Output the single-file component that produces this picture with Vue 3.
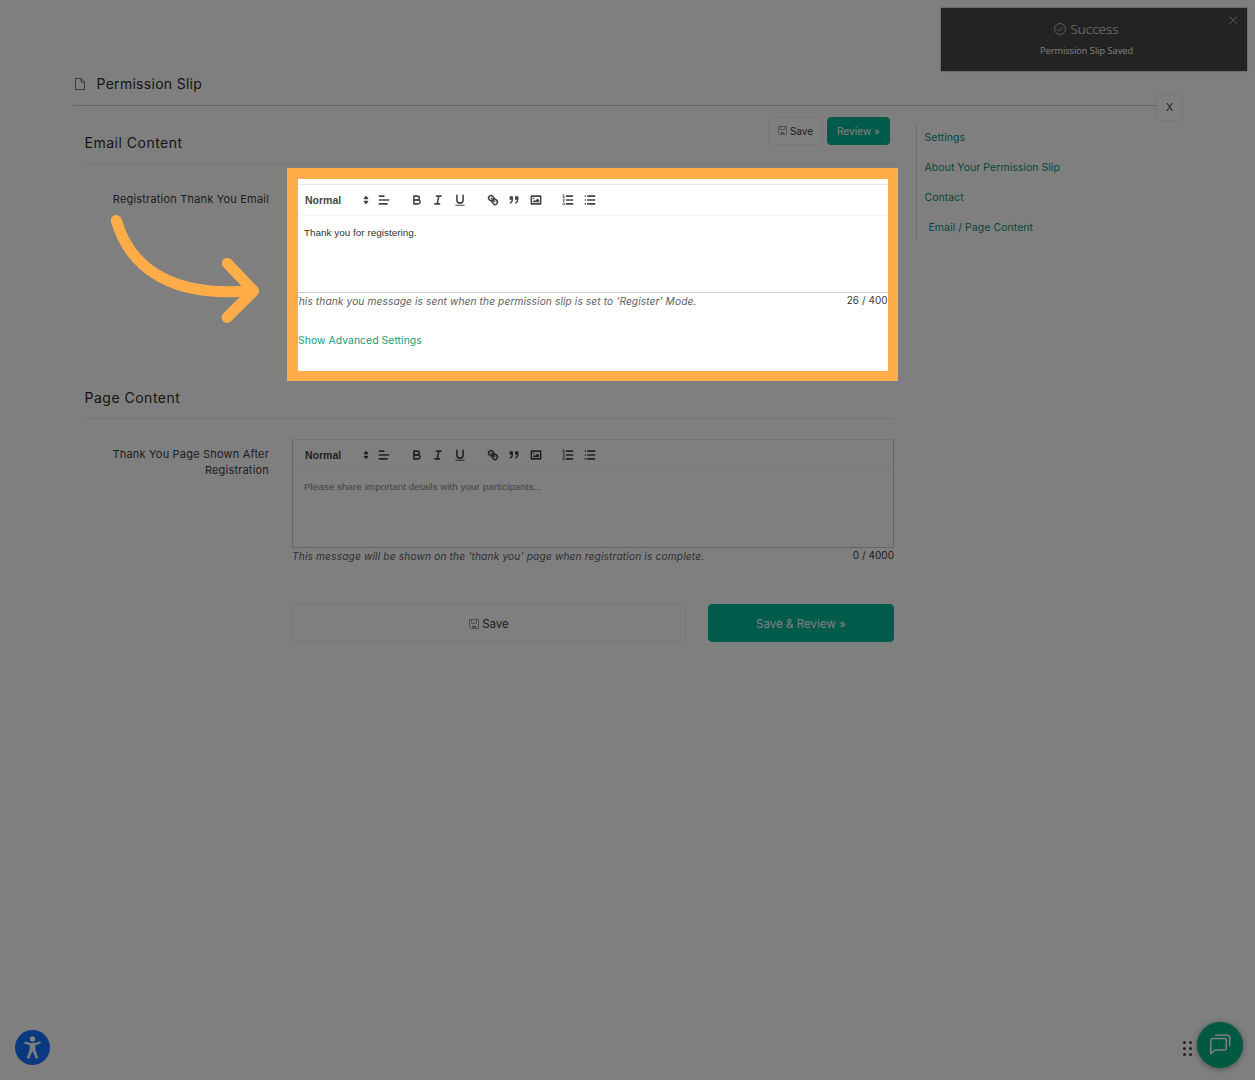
<script setup>
const sections = [
  {
    title: 'Email Content',
    label: 'Registration Thank You Email',
    text: 'Thank you for registering.',
    empty: false,
    hint: "This thank you message is sent when the permission slip is set to 'Register' Mode.",
    count: '26 / 4000',
    advanced: true,
  },
  {
    title: 'Page Content',
    label: 'Thank You Page Shown After Registration',
    text: 'Please share important details with your participants...',
    empty: true,
    hint: "This message will be shown on the 'thank you' page when registration is complete.",
    count: '0 / 4000',
    advanced: false,
  },
]
const links = ['Settings', 'About Your Permission Slip', 'Contact', 'Email / Page Content']
</script>

<template>
  <div class="page">
    <header class="page-head">
      <svg class="doc" viewBox="0 0 10 12"><path d="M.5.5h5.7l3.3 3.3v7.7h-9zM6 .7V4h3.3" /></svg>
      <h1>Permission Slip</h1>
      <button class="close">X</button>
    </header>

    <div class="body">
      <main>
        <section v-for="(s, i) in sections" :key="s.title" class="section">
          <div class="section-head">
            <h2>{{ s.title }}</h2>
            <div v-if="i === 0" class="actions">
              <button class="btn small">
                <svg class="disk" viewBox="0 0 10 10"><path d="M.5.5h9v9h-8l-1-1zM2.5.5v3.6h5V.5" /><path class="slot" d="M3 7.800h4" /></svg>
                Save
              </button>
              <button class="btn small primary">Review »</button>
            </div>
          </div>
          <div class="row">
            <label>{{ s.label }}</label>
            <div class="field">
              <div class="editor">
                <div class="toolbar">
                  <span class="picker">Normal
                    <svg class="ic fill" viewBox="0 0 18 18"><polygon points="7 11 9 13 11 11 7 11" /><polygon points="7 7 9 5 11 7 7 7" /></svg>
                  </span>
                  <svg class="ic align" viewBox="0 0 18 18"><path d="M3 4h6M3 9h12M3 14h10" /></svg>
                  <span class="group">
                    <svg class="ic" viewBox="0 0 18 18"><path d="M5,4H9.5A2.5,2.5,0,0,1,12,6.5v0A2.5,2.5,0,0,1,9.5,9H5V4Z" /><path d="M5,9h5.5A2.5,2.5,0,0,1,13,11.5v0A2.5,2.5,0,0,1,10.5,14H5V9Z" /></svg>
                    <svg class="ic" viewBox="0 0 18 18"><path d="M7 4h6M5 14h6M8 14L10 4" /></svg>
                    <svg class="ic" viewBox="0 0 18 18"><path d="M5,3V9a4.012,4.012,0,0,0,4,4H9a4.012,4.012,0,0,0,4-4V3" /><rect class="solid" x="3" y="15" width="12" height="1.300" rx=".5" /></svg>
                  </span>
                  <span class="group">
                    <svg class="ic" viewBox="0 0 18 18"><path d="M7 7l4 4" /><path d="M8.9,4.577a3.476,3.476,0,0,1,.36,4.679A3.476,3.476,0,0,1,4.577,8.900C3.185,7.500,2.035,6.400,4.217,4.217S7.500,3.185,8.900,4.577Z" /><path d="M13.423,9.100a3.476,3.476,0,0,0-4.679-.36,3.476,3.476,0,0,0,.36,4.679c1.392,1.392,2.500,2.542,4.679.36S14.815,10.500,13.423,9.100Z" /></svg>
                    <svg class="ic fill quote" viewBox="0 0 18 18"><rect x="4" y="5" width="3" height="3" /><rect x="11" y="5" width="3" height="3" /><path d="M7,8c0,4.031-3,5-3,5M14,8c0,4.031-3,5-3,5" /></svg>
                    <svg class="ic" viewBox="0 0 18 18"><rect x="3" y="4" width="12" height="10" /><circle class="solid" cx="6" cy="7" r="1" /><polygon class="solid" points="5 12 5 11 7 9 8 10 11 7 13 9 13 12" /></svg>
                  </span>
                  <span class="group">
                    <svg class="ic" viewBox="0 0 18 18"><path d="M7 4h8M7 9h8M7 14h8" /><path class="thin" d="M2.300 2.700l1.200-.5v3.300M2.500 5.500h2M4.500,10.500h-2c0-.234,1.850-1.076,1.850-2.234A.959.959,0,0,0,2.500,8.156M2.500,14.846a.959.959,0,0,0,1.850-.109A.7.7,0,0,0,3.750,14a.688.688,0,0,0,.6-.736.959.959,0,0,0-1.850-.109" /></svg>
                    <svg class="ic" viewBox="0 0 18 18"><path d="M6 4h9M6 9h9M6 14h9M3 4h.01M3 9h.01M3 14h.01" /></svg>
                  </span>
                </div>
                <div class="content" :class="{ empty: s.empty }">{{ s.text }}</div>
              </div>
              <div class="below">
                <em :class="{ loose: s.empty }">{{ s.hint }}</em>
                <span>{{ s.count }}</span>
              </div>
              <a v-if="s.advanced" class="advanced">Show Advanced Settings</a>
              <div v-else class="submit">
                <button class="btn wide">
                  <svg class="disk" viewBox="0 0 10 10"><path d="M.5.5h9v9h-8l-1-1zM2.5.5v3.6h5V.5" /><path class="slot" d="M3 7.800h4" /></svg>
                  Save
                </button>
                <button class="btn wide primary">Save &amp; Review »</button>
              </div>
            </div>
          </div>
        </section>
      </main>

      <nav>
        <a v-for="(l, i) in links" :key="l" :class="{ current: i === 3 }">{{ l }}</a>
      </nav>
    </div>

    <aside class="toast">
      <div class="toast-title">
        <svg viewBox="0 0 12 12"><circle cx="6" cy="6" r="5.500" /><path d="M3.400 6.200l1.800 1.800 3.500-3.800" /></svg>
        Success
      </div>
      <div class="toast-text">Permission Slip Saved</div>
      <svg class="toast-x" viewBox="0 0 8 8"><path d="M.5.5l7 7M7.500.5l-7 7" /></svg>
    </aside>

    <button class="a11y">
      <svg viewBox="0 0 35 35">
        <circle cx="17.500" cy="9" r="2.700" />
        <path d="M9.700 11.400l5.600 1.500h4.400l5.600-1.500.6 1.900-5.600 2v4.200l2.900 8.500-2.200.8-3.500-7.800-3.500 7.800-2.200-.8 2.900-8.500v-4.200l-5.600-2z" />
      </svg>
    </button>

    <div class="grip"><i v-for="n in 6" :key="n"></i></div>
    <button class="chat">
      <svg viewBox="0 0 22 22"><path d="M3.800 4.500H15.300a2 2 0 0 1 2 2v7.500a2 2 0 0 1-2 2H6L1.800 19.800V6.500a2 2 0 0 1 2-2zM6 1.200h12.700a2 2 0 0 1 2 2V12" /></svg>
    </button>

    <div class="spotlight"></div>
    <svg class="arrow" viewBox="0 0 160 120">
      <path d="M11.300 10.500C25 58 67 88 146 80.700M122.300 53.300L148.700 81L122 107.300" />
    </svg>
  </div>
</template>

<style>
body { background: #fff; }
</style>

<style scoped>
.page {
  position: relative;
  box-sizing: border-box;
  width: 1255px;
  height: 1080px;
  padding-top: 62px;
  overflow: hidden;
  background: #fff;
  color: #3c3c3c;
  font-family: Inter, sans-serif;
}
button { font-family: inherit; padding: 0; margin: 0; border: 0; }
h1, h2 { margin: 0; font-size: 14px; font-weight: 400; color: #2a2a2a; }

.page-head {
  position: relative;
  display: flex;
  align-items: center;
  box-sizing: border-box;
  width: 1084px;
  height: 44px;
  margin-left: 73px;
  border-bottom: 1px solid #ccc;
}
.doc { width: 10px; height: 12px; margin: 0 12px 0 1.5px; fill: none; stroke: #555; stroke-width: .8; }
h1 { letter-spacing: .29px; }
.close {
  position: absolute;
  left: 1083px;
  top: 32px;
  box-sizing: border-box;
  width: 27px;
  height: 27px;
  border: 1px solid #f0f0f0;
  border-radius: 4px;
  background: #fff;
  color: #444;
  font-size: 10.500px;
}

.body { display: flex; align-items: flex-start; margin-left: 84px; }
main { width: 810px; padding-top: 11px; }
.section { height: 255px; }
.section-head {
  display: flex;
  justify-content: space-between;
  align-items: flex-start;
  box-sizing: border-box;
  height: 47px;
  border-bottom: 1px solid #eaeaea;
}
h2 { margin-top: 16px; margin-left: .5px; line-height: 20px; letter-spacing: .5px; }
.actions { display: flex; gap: 4px; margin-right: 4px; }
.btn {
  display: flex;
  align-items: center;
  justify-content: center;
  gap: 3px;
  box-sizing: border-box;
  border: 1px solid #f0f0f0;
  border-radius: 4px;
  background: #fff;
  color: #3c3c3c;
}
.btn.primary { background: #00b694; border-color: #00b694; color: #fff; }
.small { width: 55px; height: 27.500px; font-size: 10px; }
.small.primary { width: 63px; letter-spacing: .08px; }
.disk { width: 9px; height: 9px; fill: none; stroke: #888; stroke-width: .8; }
.slot { stroke-width: 1.800; }

.row { display: flex; align-items: flex-start; gap: 23px; padding-top: 20px; }
label {
  width: 185px;
  padding-top: 8px;
  text-align: right;
  font-size: 11px;
  line-height: 15.500px;
  letter-spacing: .19px;
}
.field { width: 602px; }
.editor { box-sizing: border-box; height: 109px; border: 1px solid #ccc; border-top-color: #e8e8e8; }
.toolbar {
  display: flex;
  align-items: center;
  box-sizing: border-box;
  height: 31px;
  padding-left: 12px;
  border-bottom: 1px solid #f5f5f5;
}
.picker {
  display: flex;
  align-items: center;
  justify-content: space-between;
  width: 68px;
  font: bold 10.500px 'Liberation Sans', sans-serif;
  color: #444;
}
.ic {
  display: block;
  width: 14px;
  height: 14px;
  fill: none;
  stroke: #444;
  stroke-width: 2;
  stroke-linecap: round;
  stroke-linejoin: round;
}
.ic.fill { fill: #444; }
.ic.quote { stroke-width: 1.400; }
.solid { fill: #444; stroke: none; }
.thin { stroke-width: 1; }
.align { margin-left: 4px; }
.group { display: flex; gap: 7.600px; margin-left: 18.700px; }
.content { padding: 10px 11px 0; font: 9.930px/13px 'Liberation Sans', sans-serif; color: #333; }
.content.empty { padding-top: 9px; color: #888; }
.below { display: flex; justify-content: space-between; line-height: 14px; font-size: 10px; letter-spacing: .05px; }
.below em { padding-top: 1px; font-size: 10.200px; letter-spacing: .1px; color: #606060; }
.below em.loose { letter-spacing: .145px; }
.advanced {
  display: block;
  margin: 25px 0 0 6px;
  font-size: 10.400px;
  line-height: 16px;
  letter-spacing: .05px;
  color: #0fa080;
}
.submit { display: flex; justify-content: space-between; margin-top: 41px; }
.wide { width: 394px; height: 38px; padding-top: 1px; font-size: 11.500px; }
.wide .disk { width: 10px; height: 10px; }
.wide.primary { width: 186px; letter-spacing: .05px; }

nav {
  display: flex;
  flex-direction: column;
  height: 115px;
  margin: 19px 0 0 22px;
  padding-left: 7.500px;
  border-left: 1px solid #ddd;
}
nav a { flex: none; height: 30px; line-height: 26px; font-size: 10.500px; letter-spacing: .05px; color: #0a9072; white-space: nowrap; }
nav .current { padding-left: 4px; }

.toast {
  position: absolute;
  left: 941px;
  top: 8px;
  box-sizing: border-box;
  width: 306px;
  height: 63px;
  padding: 11px 15px 0 0;
  background: #464646;
  box-shadow: 0 0 2px #888;
  color: #fff;
  text-align: center;
  font-family: 'Open Sans', sans-serif;
}
.toast-title {
  display: flex;
  align-items: center;
  justify-content: center;
  gap: 4px;
  height: 20px;
  font-size: 13.500px;
  font-weight: 300;
}
.toast-title svg { width: 12px; height: 12px; margin-top: -1px; fill: none; stroke: #ddd; stroke-width: .8; }
.toast-text { margin-top: 5px; font-size: 9.200px; line-height: 14px; }
.toast-x { position: absolute; right: 9.500px; top: 8px; width: 8.500px; height: 8.500px; stroke: #ccc; stroke-width: .8; }

.a11y {
  position: absolute;
  left: 15px;
  top: 1030px;
  width: 35px;
  height: 35px;
  border-radius: 50%;
  background: #1472ff;
}
.a11y svg { display: block; fill: #fff; }
.grip { position: absolute; left: 1183px; top: 1040.500px; display: grid; grid-template-columns: 3px 3px; gap: 3px; }
.grip i { width: 3px; height: 3px; border-radius: 50%; background: #444; }
.chat {
  position: absolute;
  left: 1197px;
  top: 1022px;
  display: flex;
  align-items: center;
  justify-content: center;
  width: 46px;
  height: 46px;
  border-radius: 50%;
  background: #00b483;
  box-shadow: 0 1px 6px rgba(0, 0, 0, .4);
}
.chat svg { width: 22px; height: 22px; fill: none; stroke: #fff; stroke-width: 1.500; stroke-linejoin: round; }

.spotlight {
  position: absolute;
  left: 287px;
  top: 168px;
  box-sizing: border-box;
  width: 611px;
  height: 213px;
  border: 10px solid #ffad49;
  border-top-width: 11px;
  border-left-width: 11px;
  box-shadow: 0 0 0 1300px rgba(0, 0, 0, .5);
}
.arrow {
  position: absolute;
  left: 105px;
  top: 210px;
  width: 160px;
  height: 120px;
  fill: none;
  stroke: #ffad49;
  stroke-width: 11;
  stroke-linecap: round;
  stroke-linejoin: round;
}
</style>
